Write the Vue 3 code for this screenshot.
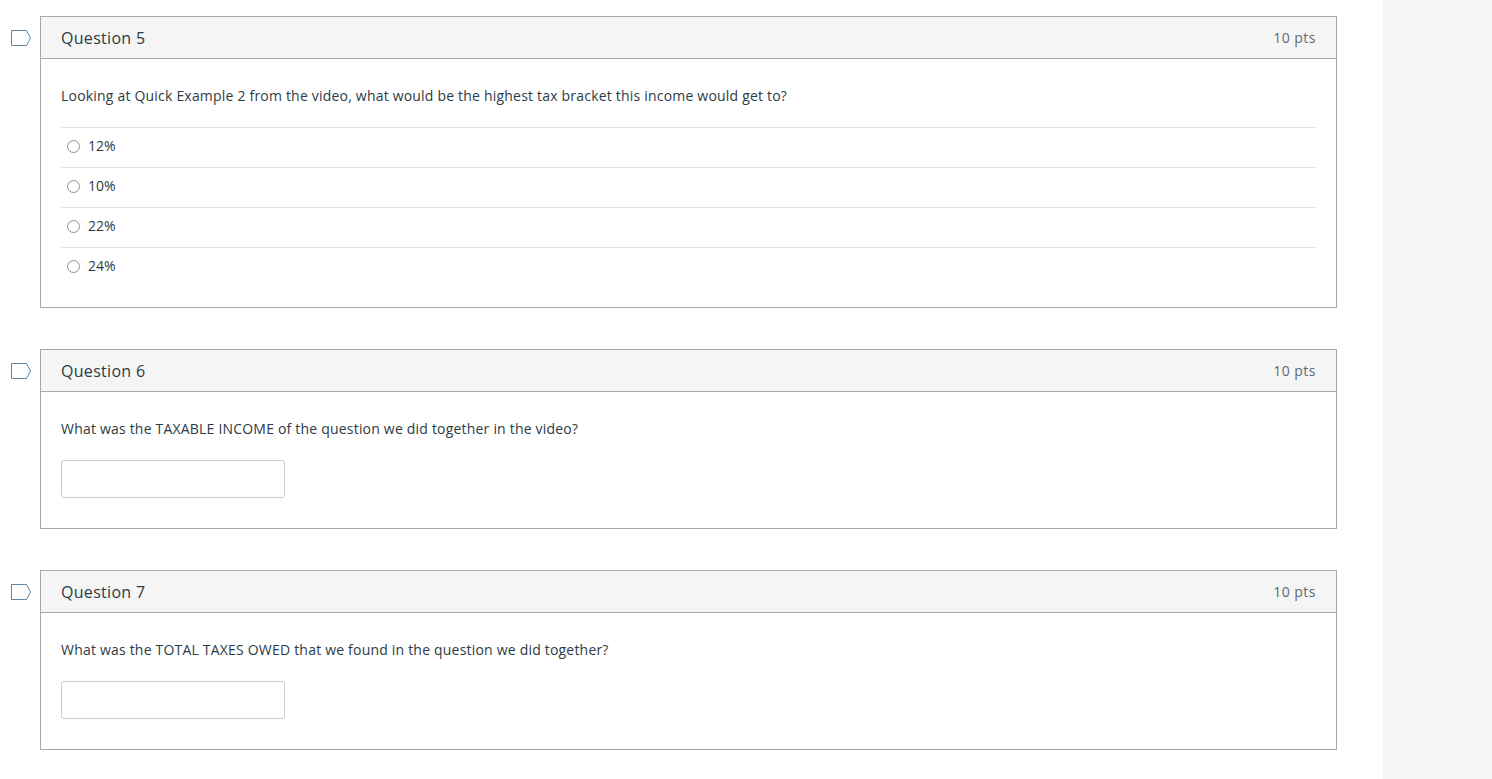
<script setup>
const questions = [
  {
    id: 5,
    title: 'Question 5',
    text: 'Looking at Quick Example 2 from the video, what would be the highest tax bracket this income would get to?',
    options: ['12%', '10%', '22%', '24%']
  },
  {
    id: 6,
    title: 'Question 6',
    text: 'What was the TAXABLE INCOME of the question we did together in the video?'
  },
  {
    id: 7,
    title: 'Question 7',
    text: 'What was the TOTAL TAXES OWED that we found in the question we did together?'
  }
]
</script>

<template>
  <div class="page">
    <main class="quiz">
      <section v-for="q in questions" :key="q.id" class="question-row">
        <svg class="flag" width="22" height="18" viewBox="0 0 22 18">
          <path d="M1.5 1.5H16.5L20.5 9L16.5 16.5H1.5Z" fill="#fff" stroke="#5b88a5" stroke-width="1" />
        </svg>
        <div class="card">
          <header class="card-head">
            <span class="title">{{ q.title }}</span>
            <span class="pts">10 pts</span>
          </header>
          <div class="card-body">
            <p class="text">{{ q.text }}</p>
            <ul v-if="q.options" class="options">
              <li v-for="opt in q.options" :key="opt" class="option">
                <span class="radio"></span>
                <span class="opt-label">{{ opt }}</span>
              </li>
            </ul>
            <input v-else class="answer" type="text" />
          </div>
        </div>
      </section>
    </main>
    <aside class="side"></aside>
  </div>
</template>

<style>
html, body {
  background: #fff;
  overflow: hidden;
}
</style>

<style scoped>
.page {
  display: flex;
  justify-content: space-between;
  height: 779px;
  font-family: "Open Sans", "Liberation Sans", sans-serif;
  color: #2d3b45;
}

.quiz {
  width: 1337px;
  padding-top: 16px;
  box-sizing: border-box;
}

.question-row {
  display: flex;
  align-items: flex-start;
  margin-bottom: 41px;
}

.flag {
  flex: none;
  margin: 13px 8px 0 10px;
}

.card {
  flex: 1;
  border: 1px solid #a8a8a8;
}

.card-head {
  display: flex;
  justify-content: space-between;
  align-items: center;
  height: 41px;
  padding: 0 20px;
  background: #f5f5f5;
  border-bottom: 1px solid #a8a8a8;
}

.title {
  font-size: 16px;
  letter-spacing: 0.3px;
  color: #2d3b45;
}

.pts {
  font-size: 14px;
  letter-spacing: 0.5px;
  color: #5c6a73;
}

.card-body {
  padding: 20px;
}

.text {
  margin: 0 0 14px;
  font-size: 14px;
  letter-spacing: 0.2px;
  line-height: 34px;
  color: #2d3b45;
}

.options {
  margin: 0;
  padding: 0;
  list-style: none;
}

.option {
  display: flex;
  align-items: center;
  height: 37px;
  padding: 0 0 2px 6px;
  border-top: 1px solid #e3e3e3;
  font-size: 14px;
  color: #2d3b45;
}

.opt-label {
  margin-bottom: 2px;
}

.radio {
  width: 11px;
  height: 11px;
  margin-right: 8px;
  border: 1px solid #8f8f8f;
  border-radius: 50%;
  background: #fff;
}

.answer {
  display: block;
  width: 224px;
  height: 38px;
  margin-bottom: 10px;
  box-sizing: border-box;
  background: #fff;
  border: 1px solid #c7cdd1;
  border-radius: 3px;
}

.side {
  width: 109px;
  background: #f5f5f5;
}
</style>
